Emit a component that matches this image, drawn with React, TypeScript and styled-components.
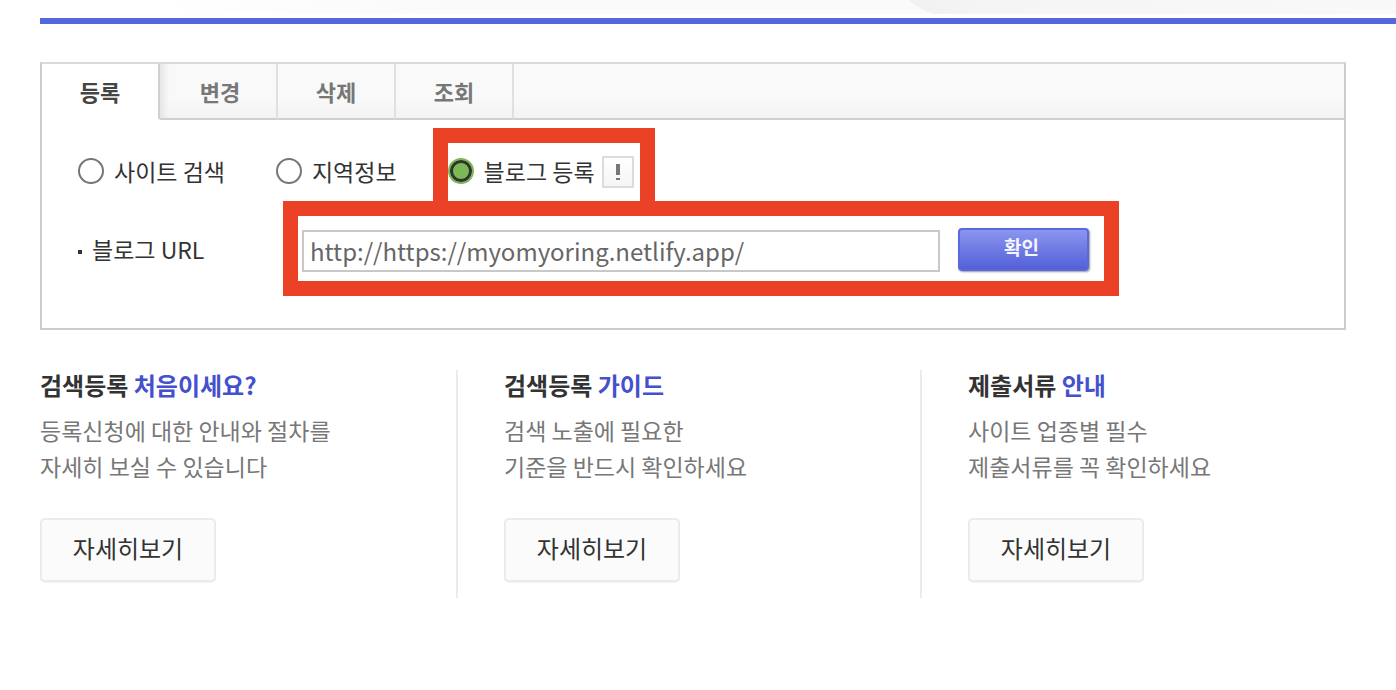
import React, { useState } from "react";
import styled, { createGlobalStyle } from "styled-components";

const GlobalStyle = createGlobalStyle`
  *, *::before, *::after { box-sizing: border-box; }
  body {
    margin: 0;
    background: #fff;
    color: #333;
    font-family: "Noto Sans CJK KR", "Liberation Sans", sans-serif;
    font-size: 23px;
    line-height: 36px;
  }
  button, input { font-family: inherit; }
`;

const Page = styled.div`
  padding-left: 40px;
`;

const Banner = styled.header`
  height: 24px;
  border-bottom: 6px solid #5468dc;
`;

const BannerArt = styled.svg`
  display: block;
  width: 100%;
  height: 18px;
`;

const Main = styled.main`
  padding-top: 38px;
`;

const Panel = styled.section`
  margin-right: 50px;
  border: 2px solid #cccccc;
  border-top-color: #dadada;
`;

const TabBar = styled.div`
  display: flex;
  height: 56px;
  background: linear-gradient(#f9f9f9 60%, #f3f3f3);
  box-shadow: inset 0 -2px #d0d0d0;
`;

const Tab = styled.button<{ $active: boolean }>`
  width: 118px;
  padding: 0;
  border: 0;
  border-right: 2px solid ${(p) => (p.$active ? "#d0d0d0" : "#e0e0e0")};
  border-bottom: 2px solid ${(p) => (p.$active ? "#fff" : "#d0d0d0")};
  background: ${(p) => (p.$active ? "#fff" : "transparent")};
  color: ${(p) => (p.$active ? "#444" : "#777")};
  font-size: 22px;
  font-weight: 700;
  line-height: 36px;
  cursor: pointer;

  &[aria-selected="true"] + & {
    padding-left: 4px;
    background: linear-gradient(to right, #e6e6e6, transparent 9px);
  }
`;

const Form = styled.form`
  padding: 36px;
  padding-bottom: 56px;
`;

const Options = styled.div`
  display: flex;
  gap: 51px;
  height: 32px;
`;

const Option = styled.div`
  position: relative;
  display: flex;
  align-items: center;
  gap: 7px;
`;

const OptionLabel = styled.label`
  display: flex;
  align-items: center;
  gap: 10px;
  padding-bottom: 2px;
  white-space: nowrap;
`;

const Radio = styled.input`
  appearance: none;
  width: 26px;
  height: 26px;
  margin: 0;
  border: 2px solid #767676;
  border-radius: 50%;
  background: #fff;

  &:checked {
    border: 2px solid #7bb956;
    background: #7bb956;
    box-shadow: inset 0 0 0 3px #333;
  }
`;

const InfoButton = styled.button`
  display: grid;
  place-items: center;
  width: 32px;
  height: 32px;
  padding: 0;
  border: 2px solid #dcdcdc;
  background: linear-gradient(#fff, #f5f5f5);
`;

const UrlRow = styled.div`
  display: flex;
  margin-top: 40px;
  height: 44px;
`;

const UrlLabel = styled.label`
  display: flex;
  align-items: center;
  flex: 0 0 224px;
  gap: 10px;
  padding-bottom: 2px;

  &::before {
    content: "";
    width: 4px;
    height: 4px;
    margin-top: 6px;
    background: #333;
  }
`;

const UrlField = styled.div`
  position: relative;
  display: flex;
  flex: 0 1 787px;
  align-items: flex-end;
  gap: 18px;
`;

const UrlInput = styled.input`
  flex: 1;
  min-width: 0;
  height: 42px;
  padding: 0 6px 2px;
  border: 2px solid #c8c8c8;
  background: #fff;
  color: #666;
  font-size: 24px;
  outline: 0;
`;

const Submit = styled.button`
  align-self: flex-start;
  width: 131px;
  height: 43px;
  padding: 0 4px 6px 0;
  border: 2px solid #5a68db;
  border-radius: 4px;
  background: linear-gradient(#8c95f0, #7480e4 40%, #5460d8);
  box-shadow: 1px 1px 2px #999;
  color: #f4f5ff;
  font-size: 19px;
  font-weight: 700;
  line-height: 24px;
`;

const Highlight = styled.div<{ $inset: string }>`
  position: absolute;
  inset: ${(p) => p.$inset};
  border: 15px solid #ea4127;
  pointer-events: none;
`;

const Guides = styled.section`
  display: grid;
  grid-template-columns: repeat(3, 1fr);
  gap: 46px;
  padding: 40px 10px 40px 0;
`;

const Guide = styled.article`
  height: 228px;
  border-right: 2px solid #ebebeb;

  &:last-child {
    border-right: 0;
  }
`;

const GuideTitle = styled.h2`
  margin: 0;
  font-size: 24px;
  font-weight: 700;
  line-height: 30px;

  em {
    color: #4450cc;
    font-style: normal;
  }
`;

const GuideText = styled.p`
  margin: 12px 0 34px;
  color: #777;
`;

const MoreLink = styled.a`
  display: flex;
  align-items: center;
  justify-content: center;
  width: 176px;
  height: 64px;
  padding-bottom: 4px;
  border: 2px solid #ebebeb;
  border-radius: 5px;
  background: #fbfbfb;
  box-shadow: 0 1px 1px #f1f1f1;
  color: #333;
  font-size: 24px;
  text-decoration: none;
`;

const tabs = ["등록", "변경", "삭제", "조회"];
const kinds = ["사이트 검색", "지역정보", "블로그 등록"];
const guides = [
  { title: "검색등록", accent: "처음이세요?", lines: ["등록신청에 대한 안내와 절차를", "자세히 보실 수 있습니다"] },
  { title: "검색등록", accent: "가이드", lines: ["검색 노출에 필요한", "기준을 반드시 확인하세요"] },
  { title: "제출서류", accent: "안내", lines: ["사이트 업종별 필수", "제출서류를 꼭 확인하세요"] },
];

export default function App() {
  const [tab, setTab] = useState(0);
  const [kind, setKind] = useState(2);
  const [url, setUrl] = useState("http://https://myomyoring.netlify.app/");

  return (
    <Page>
      <GlobalStyle />
      <Banner>
        <BannerArt viewBox="0 0 1356 18" preserveAspectRatio="none" aria-hidden="true">
          <defs>
            <linearGradient id="haze">
              <stop offset="0.08" stopColor="#fff" />
              <stop offset="0.3" stopColor="#fafafa" />
              <stop offset="1" stopColor="#fafafa" />
            </linearGradient>
            <linearGradient id="swoop">
              <stop offset="0" stopColor="#f0f0f0" />
              <stop offset="0.15" stopColor="#f5f5f5" />
              <stop offset="1" stopColor="#f9f9f9" />
            </linearGradient>
          </defs>
          <rect width="1356" height="14" fill="url(#haze)" />
          <path d="M868 0C876 6 884 11 894 14H1356V0Z" fill="url(#swoop)" />
        </BannerArt>
      </Banner>
      <Main>
        <Panel>
          <TabBar role="tablist">
            {tabs.map((name, i) => (
              <Tab key={name} type="button" role="tab" aria-selected={i === tab} $active={i === tab} onClick={() => setTab(i)}>
                {name}
              </Tab>
            ))}
          </TabBar>
          <Form onSubmit={(e) => e.preventDefault()}>
            <Options role="radiogroup" aria-label="등록">
              {kinds.map((name, i) => (
                <Option key={name}>
                  <OptionLabel>
                    <Radio type="radio" name="kind" checked={i === kind} onChange={() => setKind(i)} />
                    {name}
                  </OptionLabel>
                  {i === 2 && (
                    <>
                      <InfoButton type="button" aria-label={name}>
                        <svg width="6" height="18" viewBox="0 0 6 18" aria-hidden="true">
                          <path d="M1 1H5V12H1ZM1 15H5V17H1Z" fill="#777" />
                        </svg>
                      </InfoButton>
                      <Highlight $inset="-28px -21px -28px -15px" />
                    </>
                  )}
                </Option>
              ))}
            </Options>
            <UrlRow>
              <UrlLabel htmlFor="blog-url">블로그 URL</UrlLabel>
              <UrlField>
                <UrlInput id="blog-url" type="text" value={url} onChange={(e) => setUrl(e.target.value)} />
                <Submit type="submit">확인</Submit>
                <Highlight $inset="-27px -30px -24px -19px" />
              </UrlField>
            </UrlRow>
          </Form>
        </Panel>
        <Guides>
          {guides.map((g) => (
            <Guide key={g.accent}>
              <GuideTitle>
                {g.title} <em>{g.accent}</em>
              </GuideTitle>
              <GuideText>
                {g.lines[0]}
                <br />
                {g.lines[1]}
              </GuideText>
              <MoreLink href="#">자세히보기</MoreLink>
            </Guide>
          ))}
        </Guides>
      </Main>
    </Page>
  );
}
